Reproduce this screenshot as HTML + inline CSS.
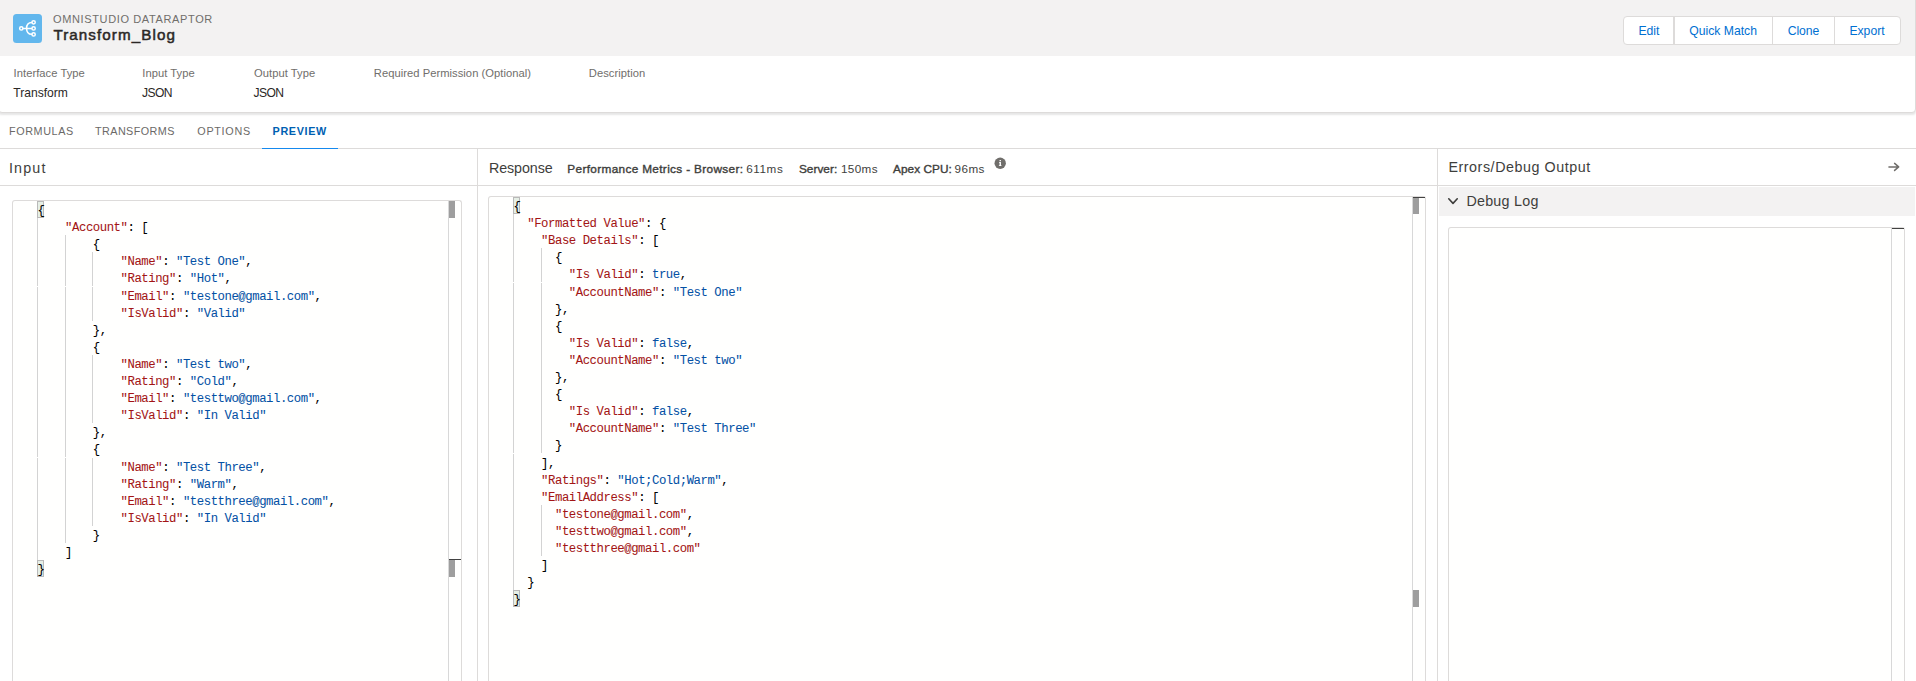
<!DOCTYPE html>
<html lang="en">
<head>
<meta charset="utf-8">
<title>Transform_Blog - OmniStudio DataRaptor</title>
<style>
*{box-sizing:border-box;margin:0;padding:0}
html,body{width:1916px;height:681px;overflow:hidden;background:#fff}
body{font-family:"Liberation Sans",sans-serif;color:#3e3e3c;position:relative;font-size:11.7px}
.abs{position:absolute}
.t{position:absolute;white-space:pre;line-height:1}

/* page header card */
#card{position:absolute;left:-2px;top:-4px;width:1918px;height:116.5px;background:#fff;border:1px solid #dddbda;border-radius:4px;box-shadow:0 2px 2px 0 rgba(0,0,0,.10)}
#cardtop{position:absolute;left:0;top:0;width:1916px;height:58.6px;background:#f3f2f2;border-radius:0 3px 0 0}
#icon{position:absolute;left:13px;top:14px;width:29px;height:29px;border-radius:3.5px;background:#62b7ed}

/* button group */
#btns{position:absolute;left:1623px;top:16px;width:278px;height:29px;border:1px solid #dddbda;border-radius:4px;background:#fff}
#btns i{position:absolute;top:0;width:1px;height:27px;background:#dddbda}
.bt{color:#0070d2;font-size:12.2px}

.lbl{color:#706e6b;font-size:11.2px;letter-spacing:.04px}
.val{color:#2b2826;font-size:12.1px}

.tab{color:#6b6967;font-size:10.8px}
.tab.act{color:#005fb2;font-weight:700}

.hl{position:absolute;background:#dddbda}
.ph{font-size:14.3px;color:#3e3e3c}
.mb{font-size:11.8px;font-weight:400;-webkit-text-stroke:.38px #3e3e3c;color:#3e3e3c}
.mv{font-size:11.7px;color:#3e3e3c}

.ed{position:absolute;background:#fffffe;border:1px solid #dddbda;border-bottom:0;border-radius:3px 3px 0 0}
.sbl{position:absolute;width:1px;background:#d8d8d8}
.mk{position:absolute;background:#9e9e9e}
.dk{position:absolute;background:#424242;height:1.2px}

.ln{position:absolute;white-space:pre;font-family:"Liberation Mono",monospace;font-size:12.3px;letter-spacing:-0.45px;-webkit-text-stroke:.05px;line-height:14px;height:14px;color:#000}
.k{color:#a31515}
.v{color:#0451a5}
.ig{position:absolute;width:1px;background:#d3d3d3}
.bm{position:absolute;border:1px solid #b9b9b9;background:#e6efe6}
</style>
</head>
<body>

<div id="card">
  <div id="cardtop"></div>
</div>

<!-- icon -->
<div id="icon">
<svg width="29" height="29" viewBox="0 0 29 29" style="position:absolute;left:0;top:0">
  <g fill="none" stroke="#fff" stroke-width="1.55" stroke-linecap="round">
    <path d="M10.2 14.4 H18.6"/>
    <path d="M18.8 8.6 C15.2 8.7 13.6 11.2 13.6 14.4 C13.6 17.6 15.2 20.1 18.8 20.3"/>
    <circle cx="8.3" cy="14.4" r="1.65" stroke-width="1.5"/>
    <circle cx="20.6" cy="8.35" r="1.65" stroke-width="1.5"/>
    <circle cx="20.6" cy="14.4" r="1.65" stroke-width="1.5"/>
    <circle cx="20.6" cy="20.45" r="1.65" stroke-width="1.5"/>
  </g>
</svg>
</div>

<div class="t" id="t_omni" style="left:53px;top:13.59px;font-size:11px;letter-spacing:.63px;color:#706e6b">OMNISTUDIO DATARAPTOR</div>
<div class="t" id="t_title" style="left:53.4px;top:26.88px;font-size:15.2px;font-weight:400;-webkit-text-stroke:.5px #2b2826;letter-spacing:1.08px;color:#2b2826">Transform_Blog</div>

<!-- buttons -->
<div id="btns">
  <i style="left:49px;width:2px"></i><i style="left:148px"></i><i style="left:210px"></i>
</div>
<div class="t bt" id="b_edit" style="left:1638.4px;top:25.3px">Edit</div>
<div class="t bt" id="b_qm" style="left:1689.2px;top:25.3px">Quick Match</div>
<div class="t bt" id="b_clone" style="left:1787.8px;top:25.3px;letter-spacing:-.1px">Clone</div>
<div class="t bt" id="b_export" style="left:1849.4px;top:25.3px">Export</div>

<!-- meta -->
<div class="t lbl" id="l1" style="left:13.6px;top:67.52px">Interface Type</div>
<div class="t lbl" id="l2" style="left:142.3px;top:67.52px">Input Type</div>
<div class="t lbl" id="l3" style="left:254.0px;top:67.52px">Output Type</div>
<div class="t lbl" id="l4" style="left:373.8px;top:67.52px">Required Permission (Optional)</div>
<div class="t lbl" id="l5" style="left:588.8px;top:67.52px">Description</div>
<div class="t val" id="v1" style="left:13.3px;top:86.56px">Transform</div>
<div class="t val" id="v2" style="left:142px;top:86.56px;letter-spacing:-.6px">JSON</div>
<div class="t val" id="v3" style="left:253.5px;top:86.56px;letter-spacing:-.6px">JSON</div>

<!-- tabs -->
<div class="t tab" id="tb1" style="left:9px;top:125.66px;letter-spacing:.6px">FORMULAS</div>
<div class="t tab" id="tb2" style="left:95px;top:125.66px;letter-spacing:.43px">TRANSFORMS</div>
<div class="t tab" id="tb3" style="left:197.3px;top:125.66px;letter-spacing:.7px">OPTIONS</div>
<div class="t tab act" id="tb4" style="left:272.6px;top:125.66px;letter-spacing:.63px">PREVIEW</div>
<div class="hl" style="left:0;top:148px;width:1916px;height:1px"></div>
<div class="abs" style="left:261.7px;top:147.75px;width:76.4px;height:1.45px;background:#1589ee"></div>

<!-- panel dividers -->
<div class="hl" style="left:0;top:185px;width:1916px;height:1px"></div>
<div class="hl" style="left:476.7px;top:149px;width:1.2px;height:540px"></div>
<div class="hl" style="left:1437px;top:149px;width:1.2px;height:540px"></div>

<div class="t ph" id="p_in" style="left:8.9px;top:160.9px;letter-spacing:1.2px">Input</div>
<div class="t ph" id="p_rs" style="left:488.9px;top:160.9px;letter-spacing:-.08px">Response</div>
<div class="t mb" id="p_m1" style="left:567.3px;top:163.7px;letter-spacing:.34px">Performance Metrics - Browser:</div>
<div class="t mv" id="p_m1v" style="left:746.2px;top:163.1px;letter-spacing:.6px">611ms</div>
<div class="t mb" id="p_m2" style="left:798.9px;top:163.7px;letter-spacing:.05px">Server:</div>
<div class="t mv" id="p_m2v" style="left:841px;top:163.1px;letter-spacing:.36px">150ms</div>
<div class="t mb" id="p_m3" style="left:893px;top:163.7px;letter-spacing:.06px">Apex CPU:</div>
<div class="t mv" id="p_m3v" style="left:954.6px;top:163.1px;letter-spacing:.4px">96ms</div>
<svg class="abs" style="left:994.3px;top:157px" width="12.4" height="12.4" viewBox="0 0 12.4 12.4"><circle cx="6.2" cy="6.2" r="5.7" fill="#706e6b"/><path d="M5.55 3h1.4v1.3h-1.4zM5.05 4.95h1.9v3.4h.55v.7h-2.6v-.7h.65v-2.7h-.5z" fill="#fff"/></svg>
<div class="t ph" id="p_er" style="left:1448.4px;top:159.8px;letter-spacing:.55px">Errors/Debug Output</div>
<svg class="abs" style="left:1887px;top:161px" width="14" height="12" viewBox="0 0 14 12"><path d="M1.95 5.9H11.5M7.6 2.4L11.65 5.9L7.6 9.4" fill="none" stroke="#706e6b" stroke-width="1.5" stroke-linecap="round" stroke-linejoin="round"/></svg>

<!-- debug log band -->
<div class="abs" style="left:1439px;top:187px;width:476px;height:28.8px;background:#f3f2f2"></div>
<svg class="abs" style="left:1446px;top:195px" width="14" height="12" viewBox="0 0 14 12"><path d="M2.75 3.75L7 8.35L11.25 3.75" fill="none" stroke="#3e3e3c" stroke-width="1.6" stroke-linecap="round" stroke-linejoin="round"/></svg>
<div class="t" id="p_dl" style="left:1466.4px;top:193.8px;font-size:14.3px;letter-spacing:.25px;color:#3e3e3c">Debug Log</div>

<!-- editors -->
<div class="ed" style="left:12px;top:200px;width:450px;height:490px"></div>
<div class="sbl" style="left:448px;top:201px;height:490px"></div>
<div class="mk" style="left:448.8px;top:201px;width:5.9px;height:16.6px"></div>
<div class="dk" style="left:448.8px;top:558.8px;width:12.2px"></div>
<div class="mk" style="left:448.8px;top:560px;width:5.9px;height:16.6px"></div>

<div class="ed" style="left:488px;top:196px;width:938px;height:490px"></div>
<div class="sbl" style="left:1412px;top:197px;height:490px"></div>
<div class="dk" style="left:1413px;top:196.8px;width:11.5px"></div>
<div class="mk" style="left:1413px;top:198px;width:5.5px;height:15.8px"></div>
<div class="mk" style="left:1413px;top:589.8px;width:5.5px;height:17.6px"></div>

<div class="ed" style="left:1448px;top:227px;width:457px;height:470px"></div>
<div class="sbl" style="left:1891px;top:228px;height:470px"></div>
<div class="dk" style="left:1892px;top:227.8px;width:11.5px"></div>

<!-- bracket match boxes -->
<div class="bm" style="left:37px;top:201px;width:7px;height:17px"></div>
<div class="bm" style="left:37px;top:560px;width:7px;height:17px"></div>
<div class="bm" style="left:513px;top:197px;width:7px;height:17px"></div>
<div class="bm" style="left:513px;top:590px;width:7px;height:17px"></div>

<div class="ig" style="left:36.90px;top:218.10px;height:342.00px"></div>
<div class="ig" style="left:64.62px;top:235.20px;height:307.80px"></div>
<div class="ig" style="left:92.34px;top:252.30px;height:68.40px"></div>
<div class="ig" style="left:92.34px;top:354.90px;height:68.40px"></div>
<div class="ig" style="left:92.34px;top:457.50px;height:68.40px"></div>
<div class="ln" style="left:37.40px;top:204.05px">{</div>
<div class="ln" style="left:37.40px;top:221.15px">    <span class="k">"Account"</span>: [</div>
<div class="ln" style="left:37.40px;top:238.25px">        {</div>
<div class="ln" style="left:37.40px;top:255.35px">            <span class="k">"Name"</span>: <span class="v">"Test One"</span>,</div>
<div class="ln" style="left:37.40px;top:272.45px">            <span class="k">"Rating"</span>: <span class="v">"Hot"</span>,</div>
<div class="ln" style="left:37.40px;top:289.55px">            <span class="k">"Email"</span>: <span class="v">"testone@gmail.com"</span>,</div>
<div class="ln" style="left:37.40px;top:306.65px">            <span class="k">"IsValid"</span>: <span class="v">"Valid"</span></div>
<div class="ln" style="left:37.40px;top:323.75px">        },</div>
<div class="ln" style="left:37.40px;top:340.85px">        {</div>
<div class="ln" style="left:37.40px;top:357.95px">            <span class="k">"Name"</span>: <span class="v">"Test two"</span>,</div>
<div class="ln" style="left:37.40px;top:375.05px">            <span class="k">"Rating"</span>: <span class="v">"Cold"</span>,</div>
<div class="ln" style="left:37.40px;top:392.15px">            <span class="k">"Email"</span>: <span class="v">"testtwo@gmail.com"</span>,</div>
<div class="ln" style="left:37.40px;top:409.25px">            <span class="k">"IsValid"</span>: <span class="v">"In Valid"</span></div>
<div class="ln" style="left:37.40px;top:426.35px">        },</div>
<div class="ln" style="left:37.40px;top:443.45px">        {</div>
<div class="ln" style="left:37.40px;top:460.55px">            <span class="k">"Name"</span>: <span class="v">"Test Three"</span>,</div>
<div class="ln" style="left:37.40px;top:477.65px">            <span class="k">"Rating"</span>: <span class="v">"Warm"</span>,</div>
<div class="ln" style="left:37.40px;top:494.75px">            <span class="k">"Email"</span>: <span class="v">"testthree@gmail.com"</span>,</div>
<div class="ln" style="left:37.40px;top:511.85px">            <span class="k">"IsValid"</span>: <span class="v">"In Valid"</span></div>
<div class="ln" style="left:37.40px;top:528.95px">        }</div>
<div class="ln" style="left:37.40px;top:546.05px">    ]</div>
<div class="ln" style="left:37.40px;top:563.15px">}</div>
<div class="ig" style="left:512.90px;top:214.10px;height:376.20px"></div>
<div class="ig" style="left:540.62px;top:248.30px;height:205.20px"></div>
<div class="ig" style="left:540.62px;top:504.80px;height:51.30px"></div>
<div class="ln" style="left:513.40px;top:200.05px">{</div>
<div class="ln" style="left:513.40px;top:217.15px">  <span class="k">"Formatted Value"</span>: {</div>
<div class="ln" style="left:513.40px;top:234.25px">    <span class="k">"Base Details"</span>: [</div>
<div class="ln" style="left:513.40px;top:251.35px">      {</div>
<div class="ln" style="left:513.40px;top:268.45px">        <span class="k">"Is Valid"</span>: <span class="v">true</span>,</div>
<div class="ln" style="left:513.40px;top:285.55px">        <span class="k">"AccountName"</span>: <span class="v">"Test One"</span></div>
<div class="ln" style="left:513.40px;top:302.65px">      },</div>
<div class="ln" style="left:513.40px;top:319.75px">      {</div>
<div class="ln" style="left:513.40px;top:336.85px">        <span class="k">"Is Valid"</span>: <span class="v">false</span>,</div>
<div class="ln" style="left:513.40px;top:353.95px">        <span class="k">"AccountName"</span>: <span class="v">"Test two"</span></div>
<div class="ln" style="left:513.40px;top:371.05px">      },</div>
<div class="ln" style="left:513.40px;top:388.15px">      {</div>
<div class="ln" style="left:513.40px;top:405.25px">        <span class="k">"Is Valid"</span>: <span class="v">false</span>,</div>
<div class="ln" style="left:513.40px;top:422.35px">        <span class="k">"AccountName"</span>: <span class="v">"Test Three"</span></div>
<div class="ln" style="left:513.40px;top:439.45px">      }</div>
<div class="ln" style="left:513.40px;top:456.55px">    ],</div>
<div class="ln" style="left:513.40px;top:473.65px">    <span class="k">"Ratings"</span>: <span class="v">"Hot;Cold;Warm"</span>,</div>
<div class="ln" style="left:513.40px;top:490.75px">    <span class="k">"EmailAddress"</span>: [</div>
<div class="ln" style="left:513.40px;top:507.85px">      <span class="k">"testone@gmail.com"</span>,</div>
<div class="ln" style="left:513.40px;top:524.95px">      <span class="k">"testtwo@gmail.com"</span>,</div>
<div class="ln" style="left:513.40px;top:542.05px">      <span class="k">"testthree@gmail.com"</span></div>
<div class="ln" style="left:513.40px;top:559.15px">    ]</div>
<div class="ln" style="left:513.40px;top:576.25px">  }</div>
<div class="ln" style="left:513.40px;top:593.35px">}</div>
<div class="abs" style="left:30px;top:286px;width:70px;height:1px;background:#fffffe"></div>
<div class="abs" style="left:506px;top:282px;width:42px;height:1px;background:#fffffe"></div>
<div class="abs" style="left:30px;top:457px;width:70px;height:1px;background:#fffffe"></div>
<div class="abs" style="left:506px;top:453px;width:42px;height:1px;background:#fffffe"></div>

</body>
</html>
